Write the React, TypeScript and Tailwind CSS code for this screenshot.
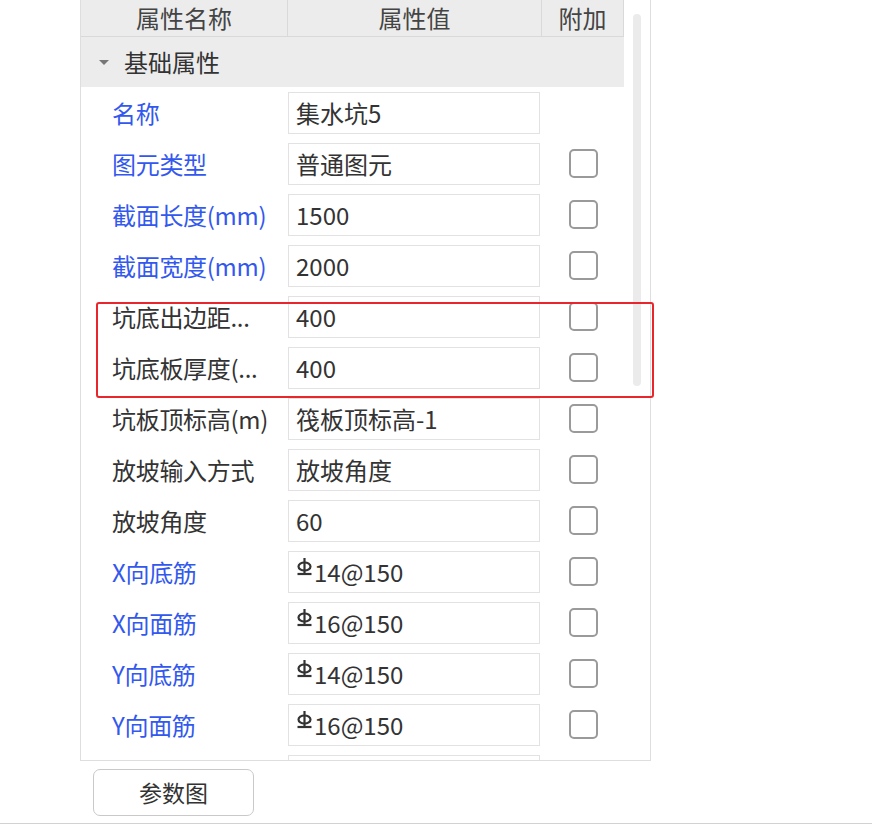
import React from 'react';

type Row = { name: string; value: string; blue?: boolean; rebar?: boolean; extra?: boolean };

const rows: Row[] = [
  { name: '名称', value: '集水坑5', blue: true, extra: false },
  { name: '图元类型', value: '普通图元', blue: true },
  { name: '截面长度(mm)', value: '1500', blue: true },
  { name: '截面宽度(mm)', value: '2000', blue: true },
  { name: '坑底出边距...', value: '400' },
  { name: '坑底板厚度(...', value: '400' },
  { name: '坑板顶标高(m)', value: '筏板顶标高-1' },
  { name: '放坡输入方式', value: '放坡角度' },
  { name: '放坡角度', value: '60' },
  { name: 'X向底筋', value: '14@150', blue: true, rebar: true },
  { name: 'X向面筋', value: '16@150', blue: true, rebar: true },
  { name: 'Y向底筋', value: '14@150', blue: true, rebar: true },
  { name: 'Y向面筋', value: '16@150', blue: true, rebar: true },
  { name: '', value: '' },
];

const font = { fontFamily: '"Microsoft YaHei", "Noto Sans CJK SC", "Noto Sans", sans-serif' };

// HRB400 rebar grade mark
const RebarMark = () => (
  <svg width="17" height="22" viewBox="0 0 17 22" className="mr-[1px] -mt-[8px]">
    <line x1="8.5" y1="1" x2="8.5" y2="17" stroke="#333" strokeWidth="2.2" />
    <ellipse cx="8.5" cy="9.5" rx="6" ry="4" fill="none" stroke="#333" strokeWidth="2.2" />
    <line x1="1.5" y1="17" x2="15.5" y2="17" stroke="#333" strokeWidth="2.2" />
  </svg>
);

const Checkbox = () => (
  <div className="w-[29px] h-[29px] rounded-[5px] border-2 border-[#9a9a9a] bg-white" />
);

export default function App() {
  return (
    <div className="relative w-[872px] h-[826px] bg-white overflow-hidden text-[#333]" style={font}>
      <div className="ml-[80px] w-[571px] h-[761px] border-x border-b border-[#dedede] flex overflow-hidden">
        <div className="w-[543px] flex flex-col">
          <div className="h-[37px] shrink-0 grid grid-cols-[207px_254px_82px] bg-[#ececec] border-b border-[#d9d9d9] text-[24px] text-[#444]">
            <div className="flex items-center justify-center border-r border-[#d9d9d9]">属性名称</div>
            <div className="flex items-center justify-center border-r border-[#d9d9d9]">属性值</div>
            <div className="flex items-center justify-center border-r border-[#d9d9d9]">附加</div>
          </div>
          <div className="h-[50px] shrink-0 flex items-center bg-[#ececec] text-[24px] text-[#333]">
            <span className="ml-[18px] mr-[15px] w-0 h-0 border-x-[5px] border-x-transparent border-t-[5px] border-t-[#777]" />
            基础属性
          </div>
          {rows.map((r, i) => (
            <div key={i} className="h-[51px] shrink-0 grid grid-cols-[207px_254px_82px]">
              <div
                className={`pl-[31px] flex items-center text-[24px] tracking-[-0.3px] whitespace-nowrap ${r.blue ? 'text-[#3358ee]' : 'text-[#333]'}`}
              >
                {r.name}
              </div>
              <div className="pt-[5px]">
                <div className="h-[42px] w-[252px] border border-[#e2e2e2] bg-white flex items-center pl-[7px] text-[24px] text-[#333]">
                  {r.rebar && <RebarMark />}
                  {r.value}
                </div>
              </div>
              <div className="flex items-center justify-center">
                {r.extra !== false && r.name !== '' && <Checkbox />}
              </div>
            </div>
          ))}
        </div>
        <div className="flex-1 flex justify-center pt-[14px]">
          <div className="w-[8px] h-[372px] bg-[#ebebeb] rounded-[4px]" />
        </div>
      </div>

      <div className="pl-[93px] pt-[8px]">
        <button className="w-[161px] h-[47px] rounded-[7px] border border-[#c9c9c9] bg-white text-[23px] text-[#333] flex items-center justify-center">
          参数图
        </button>
      </div>

      <div className="absolute left-0 right-0 top-[823px] h-[1px] bg-[#d2d2d2]" />

      <div className="absolute left-[96px] top-[302px] w-[558px] h-[96px] border-2 border-[#e8262b] rounded-[3px]" />
    </div>
  );
}
